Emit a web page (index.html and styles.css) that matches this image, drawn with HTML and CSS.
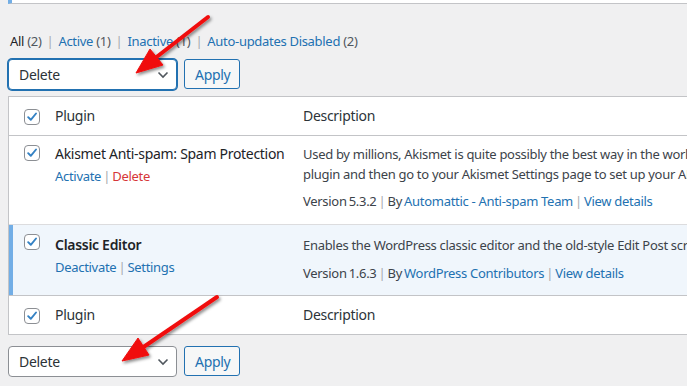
FILE: index.html
```html
<!DOCTYPE html>
<html lang="en">
<head>
    <meta charset="UTF-8">
    <meta name="viewport" content="width=device-width, initial-scale=1.0">
    <title>Plugins</title>
    <link rel="stylesheet" href="styles.css">
</head>
<body>
    <div class="wrap">
        <div class="notice"></div>

        <ul class="subsubsub">
            <li class="current">All <span class="count">(2)</span></li>
            <li class="sep">|</li>
            <li><a href="#">Active <span class="count">(1)</span></a></li>
            <li class="sep">|</li>
            <li><a href="#">Inactive <span class="count">(1)</span></a></li>
            <li class="sep">|</li>
            <li><a href="#">Auto-updates Disabled <span class="count">(2)</span></a></li>
        </ul>

        <div class="tablenav">
            <div class="select focused">
                <span>Delete</span>
                <svg class="chevron" width="12" height="8" viewBox="0 0 12 8"><path d="M1.5 1.5 L6 6 L10.5 1.5" fill="none" stroke="#50575e" stroke-width="1.6"/></svg>
            </div>
            <button class="button">Apply</button>
        </div>

        <table class="plugins">
            <thead>
                <tr>
                    <td class="check"><span class="cb"></span></td>
                    <th class="col-name">Plugin</th>
                    <th class="col-desc">Description</th>
                </tr>
            </thead>
            <tbody>
                <tr class="inactive">
                    <td class="check"><span class="cb"></span></td>
                    <td class="col-name">
                        <div class="plugin-title">Akismet Anti-spam: Spam Protection</div>
                        <div class="row-actions"><a href="#">Activate</a> <span class="sep">|</span> <a href="#" class="delete">Delete</a></div>
                    </td>
                    <td class="col-desc">
                        <p>Used by millions, Akismet is quite possibly the best way in the world to protect your blog from spam. Akismet keeps your site protected even while you sleep. To get started: activate the Akismet<br>plugin and then go to your Akismet Settings page to set up your API key.</p>
                        <div class="meta">Version 5.3.2 <span class="sep">|</span> By <a href="#">Automattic - Anti-spam Team</a> <span class="sep">|</span> <a href="#">View details</a></div>
                    </td>
                </tr>
                <tr class="active">
                    <td class="check"><span class="cb"></span></td>
                    <td class="col-name">
                        <div class="plugin-title"><strong>Classic Editor</strong></div>
                        <div class="row-actions"><a href="#">Deactivate</a> <span class="sep">|</span> <a href="#">Settings</a></div>
                    </td>
                    <td class="col-desc">
                        <p>Enables the WordPress classic editor and the old-style Edit Post screen with TinyMCE, Meta Boxes, etc. Supports the older plugins that extend this screen.</p>
                        <div class="meta">Version 1.6.3 <span class="sep">|</span> By <a href="#">WordPress Contributors</a> <span class="sep">|</span> <a href="#">View details</a></div>
                    </td>
                </tr>
            </tbody>
            <tfoot>
                <tr>
                    <td class="check"><span class="cb"></span></td>
                    <th class="col-name">Plugin</th>
                    <th class="col-desc">Description</th>
                </tr>
            </tfoot>
        </table>

        <div class="tablenav bottom">
            <div class="select">
                <span>Delete</span>
                <svg class="chevron" width="12" height="8" viewBox="0 0 12 8"><path d="M1.5 1.5 L6 6 L10.5 1.5" fill="none" stroke="#50575e" stroke-width="1.6"/></svg>
            </div>
            <button class="button">Apply</button>
        </div>
    </div>

    <!-- annotation arrows drawn over the screenshot -->
    <svg class="arrows" width="687" height="386" viewBox="0 0 687 386">
        <defs>
            <filter id="shadow" x="-20%" y="-20%" width="140%" height="140%">
                <feDropShadow dx="1.5" dy="2" stdDeviation="1.5" flood-color="#000" flood-opacity="0.45"/>
            </filter>
        </defs>
        <g filter="url(#shadow)" fill="#f00f0f" stroke="#f00f0f">
            <line x1="208" y1="17" x2="154" y2="59" stroke-width="4" stroke-linecap="round"/>
            <polygon points="136,73 163,65 150,49" stroke-width="1" stroke-linejoin="round"/>
            <line x1="217" y1="297" x2="142" y2="348" stroke-width="4" stroke-linecap="round"/>
            <polygon points="122,361 149,355 138,338" stroke-width="1" stroke-linejoin="round"/>
        </g>
    </svg>
</body>
</html>
```

FILE: styles.css
```css
html, body {
    margin: 0;
    padding: 0;
}
body {
    background: #f0f0f1;
    color: #3c434a;
    font-family: "Noto Sans", "Open Sans", sans-serif;
    font-size: 13px;
    letter-spacing: -0.3px;
    line-height: 1.4;
    width: 687px;
    height: 386px;
    overflow: hidden;
    position: relative;
}
a {
    color: #2271b1;
    text-decoration: none;
}
.wrap {
    padding-left: 8px;
    width: 1000px;
}
.notice {
    height: 4px;
    background: #fff;
    border-left: 4px solid #72aee6;
    border-bottom: 1px solid #c3c4c7;
    box-sizing: border-box;
}
.subsubsub {
    list-style: none;
    margin: 27px 0 0 2px;
    padding: 0;
    display: flex;
    gap: 5px;
    line-height: 20px;
    color: #50575e;
}
.subsubsub .current {
    color: #1d2327;
}
.subsubsub .count {
    color: #50575e;
}
.subsubsub .sep {
    color: #a7aaad;
}
.tablenav {
    display: flex;
    gap: 6px;
    margin: 8px 0 6px;
    height: 31px;
}
.tablenav.bottom {
    margin: 11px 0 0;
}
.select {
    width: 169px;
    box-sizing: border-box;
    border: 1px solid #8c8f94;
    border-radius: 4px;
    background: #fff;
    display: flex;
    align-items: center;
    justify-content: space-between;
    padding: 0 7px 0 10px;
    color: #2c3338;
    font-size: 14px;
}
.select.focused {
    border-color: #2271b1;
    box-shadow: 0 0 0 1px #2271b1;
}
.chevron {
    margin-top: 1px;
}
.button {
    font-family: inherit;
    font-size: 14px;
    letter-spacing: -0.3px;
    color: #2271b1;
    background: #f6f7f7;
    border: 1px solid #2271b1;
    border-radius: 3px;
    padding: 0 10px;
    height: 30px;
    width: 56px;
    margin-left: 1px;
}
.plugins {
    border: 1px solid #c3c4c7;
    border-spacing: 0;
    background: #fff;
    width: 990px;
    table-layout: fixed;
}
.plugins th, .plugins td {
    text-align: left;
    vertical-align: top;
    font-weight: 400;
}
.plugins thead td, .plugins thead th,
.plugins tfoot td, .plugins tfoot th {
    height: 38px;
    padding: 0 10px;
    vertical-align: middle;
    color: #2c3338;
    font-size: 14px;
}
.plugins thead td, .plugins thead th {
    border-bottom: 1px solid #c3c4c7;
}
.plugins tfoot td, .plugins tfoot th {
    border-top: 1px solid #c3c4c7;
}
.plugins .check {
    width: 36px;
    padding: 0 0 0 15px;
    box-sizing: border-box;
}
.plugins thead .check, .plugins tfoot .check {
    padding-left: 15px;
}
.plugins .col-name {
    width: 248px;
    box-sizing: border-box;
}
.plugins tbody td {
    padding: 8px 10px 13px;
}
.plugins tbody td.check {
    padding: 8px 0 0 15px;
}
.plugins tbody .inactive td {
    border-bottom: 1px solid #dcdcde;
}
.plugins .active td {
    background: #f0f6fc;
    padding-top: 10px;
    padding-bottom: 12px;
}
.plugins .active td.check {
    box-shadow: inset 4px 0 0 #72aee6;
}
.cb {
    display: block;
    width: 16px;
    height: 16px;
    box-sizing: border-box;
    border: 1px solid #8c8f94;
    border-radius: 4px;
    background: #fff url("data:image/svg+xml,%3Csvg xmlns='http://www.w3.org/2000/svg' viewBox='0 0 16 16'%3E%3Cpath d='M3.6 8.2 L6.6 11.2 L12.6 4' fill='none' stroke='%233582c4' stroke-width='2.2' stroke-linecap='round' stroke-linejoin='round'/%3E%3C/svg%3E") center/14px no-repeat;
    margin-top: 1px;
}
.plugin-title {
    font-size: 14px;
    line-height: 19px;
    color: #1d2327;
    white-space: nowrap;
}
.plugin-title strong {
    font-weight: 600;
}
.row-actions {
    margin-top: 3px;
    line-height: 20px;
    word-spacing: -1px;
}
.row-actions .sep, .meta .sep {
    color: #a7aaad;
}
.row-actions .delete {
    color: #d63638;
}
.col-desc p {
    margin: 0;
    line-height: 20px;
    white-space: nowrap;
}
.col-desc .meta {
    margin-top: 7px;
    line-height: 20px;
    white-space: nowrap;
    word-spacing: -1px;
}
.col-desc .meta a {
    word-spacing: normal;
}
.active .col-desc .meta {
    margin-top: 8px;
}
.arrows {
    position: absolute;
    left: 0;
    top: 0;
    pointer-events: none;
}
```
